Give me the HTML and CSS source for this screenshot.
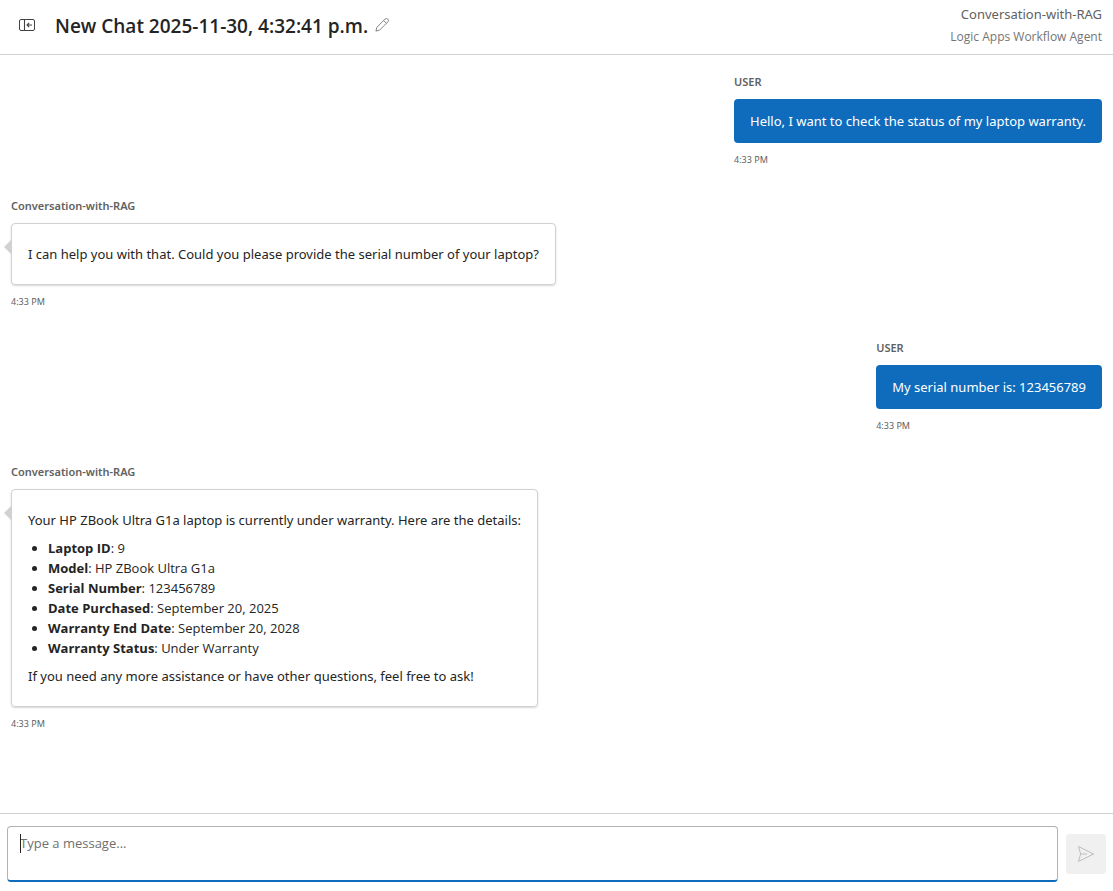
FILE: index.html
```html
<!DOCTYPE html>
<html lang="en">
<head>
<meta charset="utf-8">
<meta name="viewport" content="width=device-width, initial-scale=1">
<title>New Chat</title>
<link rel="stylesheet" href="styles.css">
</head>
<body>
<div class="app">
  <header class="header">
    <button class="icon-button" type="button" aria-label="Collapse sidebar">
      <svg width="16" height="14" viewBox="0 0 16 14" fill="none" stroke="#424242">
        <rect x="0.5" y="1.5" width="15" height="11" rx="1.5"/>
        <path d="M5.5 1.5v11M13 7H8M10.2 4.8L8 7l2.2 2.2" stroke-width="1.1"/>
      </svg>
    </button>
    <h1 class="title">New Chat 2025-11-30, 4:32:41 p.m.</h1>
    <button class="icon-button edit" type="button" aria-label="Rename chat">
      <svg width="14" height="14" viewBox="0 0 14 14" fill="none" stroke="#757575" stroke-width="0.9" stroke-linejoin="round">
        <path d="M10 1.1a1.9 1.9 0 0 1 2.8 2.8L4.6 12.1 0.9 13.1 1.9 9.3zM8.6 2.5l2.8 2.8"/>
      </svg>
    </button>
    <div class="agent">
      <div class="agent-name">Conversation-with-RAG</div>
      <div class="agent-kind">Logic Apps Workflow Agent</div>
    </div>
  </header>

  <main class="messages">
    <article class="message user">
      <div class="sender">USER</div>
      <div class="bubble">Hello, I want to check the status of my laptop warranty.</div>
      <time class="time">4:33 PM</time>
    </article>
    <article class="message bot">
      <div class="sender">Conversation-with-RAG</div>
      <div class="bubble"><p>I can help you with that. Could you please provide the serial number of your laptop?</p></div>
      <time class="time">4:33 PM</time>
    </article>
    <article class="message user">
      <div class="sender">USER</div>
      <div class="bubble">My serial number is: 123456789</div>
      <time class="time">4:33 PM</time>
    </article>
    <article class="message bot">
      <div class="sender">Conversation-with-RAG</div>
      <div class="bubble">
        <p>Your HP ZBook Ultra G1a laptop is currently under warranty. Here are the details:</p>
        <ul class="details">
          <li><strong>Laptop ID</strong>: 9</li>
          <li><strong>Model</strong>: HP ZBook Ultra G1a</li>
          <li><strong>Serial Number</strong>: 123456789</li>
          <li><strong>Date Purchased</strong>: September 20, 2025</li>
          <li><strong>Warranty End Date</strong>: September 20, 2028</li>
          <li><strong>Warranty Status</strong>: Under Warranty</li>
        </ul>
        <p>If you need any more assistance or have other questions, feel free to ask!</p>
      </div>
      <time class="time">4:33 PM</time>
    </article>
  </main>

  <form class="composer">
    <div class="field">
      <textarea class="input" aria-label="Message" placeholder="Type a message..."></textarea>
    </div>
    <button class="send" type="button" aria-label="Send" disabled>
      <svg width="18" height="18" viewBox="0 0 18 18" fill="none" stroke="#bdbdbd" stroke-linejoin="round">
        <path d="M1.5 1.5L16.5 9l-15 7.5L3.6 9zM3.6 9H10"/>
      </svg>
    </button>
  </form>
</div>
</body>
</html>
```
FILE: styles.css
```css
* {
  box-sizing: border-box;
}

body {
  margin: 0;
  font-family: "Noto Sans", "Open Sans", sans-serif;
  font-size: 13px;
  line-height: 20px;
  color: #242424;
  background: #fff;
}

.title,
.agent-kind,
.details,
.input {
  font-family: "Open Sans", "Noto Sans", sans-serif;
}

.app {
  display: flex;
  flex-direction: column;
  min-height: 100vh;
}

.header {
  display: flex;
  align-items: flex-start;
  padding: 3px 11px 6px 19px;
  border-bottom: 1px solid #d1d1d1;
}

.icon-button {
  display: flex;
  padding: 0;
  border: 0;
  background: none;
  margin-top: 15px;
}

.title {
  margin: 9px 7px 0 20px;
  font-size: 19px;
  font-weight: 600;
  line-height: 28px;
}

.agent {
  margin-left: auto;
  text-align: right;
}

.agent-name {
  color: #616161;
  line-height: 22px;
}

.agent-kind {
  color: #757575;
  font-size: 12px;
  line-height: 23px;
}

.messages {
  flex: 1;
  display: flex;
  flex-direction: column;
  gap: 30px;
  padding: 19px 11px;
}

.message {
  display: flex;
  flex-direction: column;
  align-items: flex-start;
}

.user {
  align-self: flex-end;
}

.bot {
  align-self: flex-start;
}

.sender {
  margin-bottom: 9px;
  color: #616161;
  font-size: 11px;
  font-weight: 600;
  line-height: 16px;
}

.time {
  margin-top: 9px;
  color: #616161;
  font-size: 9px;
  line-height: 16px;
}

.bubble {
  position: relative;
  border-radius: 4px;
}

.user .bubble {
  padding: 12px 16px;
  background: #0f6cbd;
  color: #fff;
}

.bot .bubble {
  padding: 20px 16px;
  border: 1px solid #d1d1d1;
  box-shadow: 0 1px 2px rgba(0, 0, 0, 0.16);
}

.bot .bubble::before {
  content: "";
  position: absolute;
  top: 16px;
  left: -8px;
  border: 7px solid transparent;
  border-left-width: 0;
  border-right-color: #d1d1d1;
}

.bubble p {
  margin: 0;
}

.details {
  margin: 8px 0;
  padding-left: 20px;
}

.composer {
  display: flex;
  align-items: center;
  gap: 8px;
  padding: 12px 7px 9px;
  border-top: 1px solid #d1d1d1;
}

.field {
  position: relative;
  flex: 1;
  height: 56px;
  border: 1px solid #b3b3b3;
  border-bottom: 2px solid #0f6cbd;
  border-radius: 4px;
  overflow: hidden;
}

.field::before {
  content: "";
  position: absolute;
  top: 7px;
  left: 12px;
  width: 1px;
  height: 19px;
  background: #242424;
}

.input {
  display: block;
  width: 100%;
  height: 100%;
  padding: 6px 12px;
  border: 0;
  outline: 0;
  resize: none;
  background: none;
  color: #242424;
  font-size: 13px;
  line-height: 20px;
}

.input::placeholder {
  color: #707070;
}

.send {
  display: flex;
  align-items: center;
  justify-content: center;
  width: 40px;
  height: 40px;
  padding: 0;
  border: 0;
  border-radius: 4px;
  background: #f0f0f0;
}
```
